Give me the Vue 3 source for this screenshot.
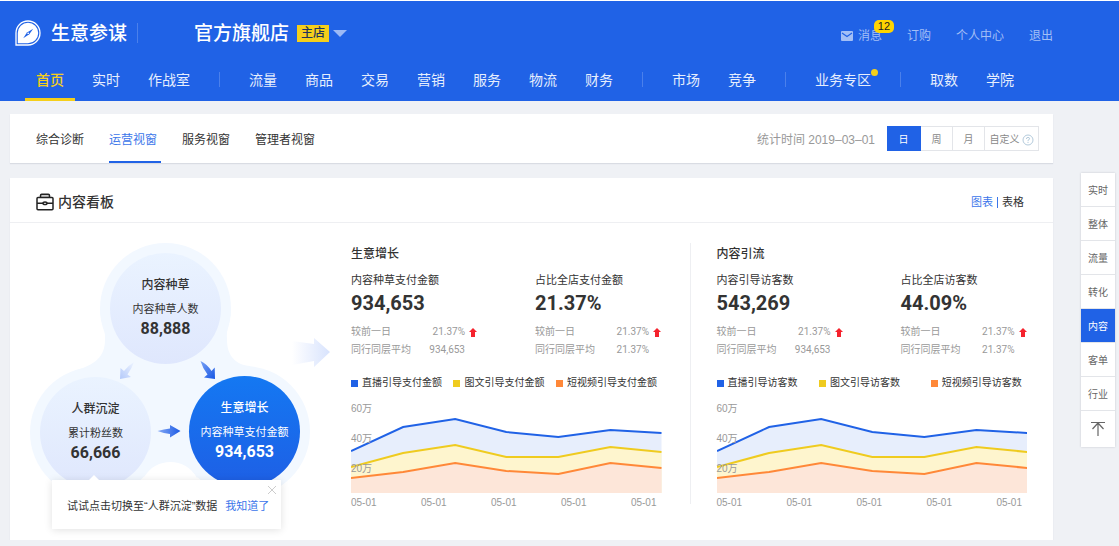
<script setup>
import { ref } from 'vue'

const navGroups = [
  ['首页', '实时', '作战室'],
  ['流量', '商品', '交易', '营销', '服务', '物流', '财务'],
  ['市场', '竞争'],
  ['业务专区'],
  ['取数', '学院'],
]
const activeNav = ref('首页')
const flagged = '业务专区'

const tabs = ['综合诊断', '运营视窗', '服务视窗', '管理者视窗']
const activeTab = ref('运营视窗')

const periods = ['日', '周', '月', '自定义']
const activePeriod = ref('日')

const sections = ['实时', '整体', '流量', '转化', '内容', '客单', '行业']
const activeSection = ref('内容')

const nodes = [
  { key: 'seed', title: '内容种草', label: '内容种草人数', value: '88,888' },
  { key: 'crowd', title: '人群沉淀', label: '累计粉丝数', value: '66,666' },
  { key: 'growth', title: '生意增长', label: '内容种草支付金额', value: '934,653' },
]
const showTip = ref(true)

const panels = [
  {
    key: 'pay',
    title: '生意增长',
    metrics: [
      { label: '内容种草支付金额', value: '934,653', change: '21.37%', average: '934,653' },
      { label: '占比全店支付金额', value: '21.37%', change: '21.37%', average: '21.37%' },
    ],
    legend: ['直播引导支付金额', '图文引导支付金额', '短视频引导支付金额'],
  },
  {
    key: 'visit',
    title: '内容引流',
    metrics: [
      { label: '内容引导访客数', value: '543,269', change: '21.37%', average: '934,653' },
      { label: '占比全店访客数', value: '44.09%', change: '21.37%', average: '21.37%' },
    ],
    legend: ['直播引导访客数', '图文引导访客数', '短视频引导访客数'],
  },
]

const xs = [0, 52, 104, 155, 207, 259, 310]
const series = [
  { color: '#2062e6', fill: '#e7eefc', ys: [51, 27, 19, 32, 37, 30, 33] },
  { color: '#efcb1f', fill: '#fef5ce', ys: [67, 53, 45, 57, 57, 47, 52] },
  { color: '#ff8838', fill: '#fde6d9', ys: [78, 72, 63, 71, 74, 63, 68] },
].map((s) => {
  const line = xs.map((x, i) => `${x},${s.ys[i]}`).join(' ')
  return { ...s, line, area: `0,93 ${line} 310,93` }
})
const dates = ['05-01', '05-01', '05-01', '05-01', '05-01']
</script>

<template>
  <div class="page">
    <header class="header">
      <div class="topbar">
        <svg class="logo" viewBox="0 0 26 26" width="26" height="26" aria-hidden="true">
          <path d="M1 25V13A12 12 0 1 1 13 25Z" fill="none" stroke="#fff" stroke-width="1.300" />
          <path d="M2.800 23.200V13A10.200 10.200 0 1 1 13 23.200Z" fill="#fff" />
          <path d="M18.200 8.800L14.300 14.300L8.200 18.200L12 12.500Z" fill="#2062e6" />
          <circle cx="13.200" cy="13.400" r="0.800" fill="#fff" />
        </svg>
        <span class="brand">生意参谋</span>
        <span class="brand-line"></span>
        <button class="shop" type="button">
          <span class="shop-name">官方旗舰店</span>
          <span class="shop-tag">主店</span>
          <svg viewBox="0 0 14 7" width="14" height="7" aria-hidden="true"><path d="M0 0H14L7 7Z" fill="#9dbaf5" /></svg>
        </button>
        <nav class="account">
          <a href="#" class="messages">
            <svg viewBox="0 0 12 10" width="12" height="10" aria-hidden="true">
              <rect width="12" height="10" rx="1" fill="#a3bff6" />
              <path d="M1 2L6 5.500L11 2" fill="none" stroke="#2062e6" stroke-width="1.200" />
            </svg>
            消息<span class="count">12</span>
          </a>
          <a href="#">订购</a>
          <a href="#">个人中心</a>
          <a href="#">退出</a>
        </nav>
      </div>
      <nav class="mainnav">
        <div v-for="(group, g) in navGroups" :key="g" class="navgroup">
          <a
            v-for="item in group"
            :key="item"
            href="#"
            :class="{ active: item === activeNav, flagged: item === flagged }"
            @click.prevent="activeNav = item"
          >{{ item }}</a>
        </div>
      </nav>
    </header>

    <div class="layout">
      <main class="main">
        <section class="card filterbar">
          <nav class="tabs">
            <a
              v-for="tab in tabs"
              :key="tab"
              href="#"
              :class="{ active: tab === activeTab }"
              @click.prevent="activeTab = tab"
            >{{ tab }}</a>
          </nav>
          <span class="date">统计时间 2019–03–01</span>
          <div class="periods">
            <button
              v-for="p in periods"
              :key="p"
              type="button"
              :class="{ active: p === activePeriod, custom: p === '自定义' }"
              @click="activePeriod = p"
            >
              {{ p }}
              <svg v-if="p === '自定义'" viewBox="0 0 12 12" width="12" height="12" aria-hidden="true">
                <circle cx="6" cy="6" r="5" fill="none" stroke="#b4cbdc" />
                <path d="M4.400 5Q4.400 3.400 6 3.400T7.600 4.800Q7.600 5.600 6 6.300V7.200M6 8V9" fill="none" stroke="#b4cbdc" />
              </svg>
            </button>
          </div>
        </section>

        <section class="card board">
          <div class="board-head">
            <svg viewBox="0 0 18 18" width="18" height="18" aria-hidden="true" fill="none" stroke="#222" stroke-width="1.500">
              <path d="M4.500 4.500V2.500Q4.500 1.300 5.700 1.300H12.300Q13.500 1.300 13.500 2.500V4.500" fill="#ccc" />
              <rect x="1" y="4.500" width="16" height="12.300" rx="1" fill="#fff" />
              <path d="M1 10.300H7M11 10.300H17" />
              <ellipse cx="9" cy="10.300" rx="2" ry="1.300" />
            </svg>
            <h2>内容看板</h2>
            <div class="views">
              <a href="#" class="active">图表</a><span></span><a href="#">表格</a>
            </div>
          </div>

          <div class="board-body">
            <div class="diagram">
              <svg class="canvas" viewBox="0 0 341 317" width="341" height="317" aria-hidden="true">
                <defs>
                  <linearGradient id="fade" x1="0" x2="1"><stop offset="0" stop-color="#fff" /><stop offset="1" stop-color="#d8e3fd" /></linearGradient>
                  <linearGradient id="soft" x1="1" y1="0" x2="0" y2="1"><stop offset="0" stop-color="#eef4ff" /><stop offset="1" stop-color="#b3c9fa" /></linearGradient>
                  <linearGradient id="down" x1="0" y1="0" x2="1" y2="1"><stop offset="0" stop-color="#7aa2f5" /><stop offset="1" stop-color="#1656e4" /></linearGradient>
                  <linearGradient id="right" x1="0" x2="1"><stop offset="0" stop-color="#86a9f5" /><stop offset="1" stop-color="#1c5be5" /></linearGradient>
                </defs>
                <g fill="#f2f8ff">
                  <circle cx="155.500" cy="85.500" r="65.500" />
                  <circle cx="85.500" cy="209.500" r="65.500" />
                  <circle cx="234.500" cy="208.500" r="65.500" />
                  <path d="M90 86C90 98 96 104 95 117C95 134 84 142 67 147L85 209L134 254C146 234 176 234 187 255L234 208L240 143C227 142 217 134 217 117C216 104 221 98 221 86Z" />
                </g>
                <path fill="url(#fade)" d="M282 118L304 121V115L320 129L304 144V138L282 142Z" />
                <path fill="url(#soft)" d="M110 156L110.500 145L114 148Q119 142 124 139Q122 145 117.500 151.500L121 154Z" />
                <path fill="url(#down)" d="M205 156L204.700 144.500L201.500 148Q197 141 190.500 138Q193 146 197.500 151.500L194 154.500Z" />
                <path fill="url(#right)" d="M147.500 208Q154 206 160 205.500V202L170.500 208L160 214.500V211Q154 210.500 147.500 208Z" />
              </svg>
              <button v-for="n in nodes" :key="n.key" type="button" class="node" :class="n.key">
                <span class="node-title">{{ n.title }}</span>
                <span class="node-label">{{ n.label }}</span>
                <span class="node-value">{{ n.value }}</span>
              </button>
              <div v-if="showTip" class="tip">
                <span>试试点击切换至“人群沉淀”数据</span>
                <button type="button" class="tip-ok" @click="showTip = false">我知道了</button>
                <button type="button" class="tip-close" aria-label="关闭" @click="showTip = false">
                  <svg viewBox="0 0 10 10" width="10" height="10"><path d="M1 1L9 9M9 1L1 9" stroke="#ccc" /></svg>
                </button>
              </div>
            </div>

            <article v-for="p in panels" :key="p.key" class="panel" :class="p.key">
              <h3>{{ p.title }}</h3>
              <div class="metrics">
                <div v-for="m in p.metrics" :key="m.label">
                  <div class="metric-label">{{ m.label }}</div>
                  <div class="metric-value">{{ m.value }}</div>
                  <div class="compare">
                    <span>较前一日</span><b>{{ m.change }}</b>
                    <svg viewBox="0 0 8 9" width="8" height="9" aria-hidden="true"><path d="M4 0L8 4H6V9H2V4H0Z" fill="#f5222d" /></svg>
                  </div>
                  <div class="compare"><span>同行同层平均</span><b>{{ m.average }}</b></div>
                </div>
              </div>
              <ul class="legend">
                <li v-for="(name, i) in p.legend" :key="name">
                  <i :style="{ background: series[i].color }"></i>{{ name }}
                </li>
              </ul>
              <div class="chart">
                <svg viewBox="0 0 310 93" preserveAspectRatio="none" role="img" :aria-label="p.title">
                  <template v-for="s in series" :key="s.color">
                    <polygon :points="s.area" :fill="s.fill" />
                    <polyline :points="s.line" fill="none" :stroke="s.color" stroke-width="2" vector-effect="non-scaling-stroke" />
                  </template>
                </svg>
                <div class="scale"><span>60万</span><span>40万</span><span>20万</span></div>
              </div>
              <div class="dates"><span v-for="(d, i) in dates" :key="i">{{ d }}</span></div>
            </article>
          </div>
        </section>
      </main>

      <nav class="sidenav">
        <a
          v-for="s in sections"
          :key="s"
          href="#"
          :class="{ active: s === activeSection }"
          @click.prevent="activeSection = s"
        >{{ s }}</a>
        <button type="button" aria-label="返回顶部">
          <svg viewBox="0 0 16 16" width="16" height="16" fill="none" stroke="#666"><path d="M1 1.500H15M8 2V15M2.500 8L8 2L13.500 8" stroke-width="1.200" /></svg>
        </button>
      </nav>
    </div>
  </div>
</template>

<style>
body {
  margin: 0;
  background: #eff1f5;
}
</style>

<style scoped>
.page,
.page * {
  box-sizing: border-box;
}
.page {
  border-top: 1px solid #fff;
  font-family: 'Liberation Sans', 'Noto Sans CJK SC', sans-serif;
  font-size: 12px;
  line-height: 16px;
  color: #333;
}
a {
  color: inherit;
  text-decoration: none;
}
button {
  margin: 0;
  padding: 0;
  border: 0;
  background: none;
  font: inherit;
  color: inherit;
  cursor: pointer;
}
svg {
  display: block;
  flex: none;
}
h2,
h3,
ul {
  margin: 0;
  padding: 0;
}

.header {
  display: flex;
  flex-direction: column;
  height: 100px;
  background: #2062e6;
  color: #fff;
}
.topbar {
  display: flex;
  align-items: center;
  height: 64px;
  padding: 0 66px 0 15px;
}
.brand,
.shop-name {
  padding-top: 2px;
  font-size: 19px;
  line-height: 24px;
  font-weight: 500;
}
.brand {
  margin-left: 10px;
}
.brand-line {
  width: 1px;
  height: 20px;
  margin: 0 56px 0 10px;
  background: #4b80eb;
}
.shop {
  display: flex;
  align-items: center;
}
.shop-tag {
  width: 32px;
  margin: 0 4px 0 8px;
  background: #f5cf1b;
  color: #22355c;
  font-weight: 500;
  line-height: 17px;
}
.account {
  display: flex;
  gap: 25px;
  margin-left: auto;
  padding-top: 6px;
  color: #a3bff6;
}
.messages {
  display: flex;
  align-items: center;
  gap: 5px;
  position: relative;
}
.count {
  position: absolute;
  right: -12px;
  top: -8px;
  width: 20px;
  height: 13px;
  border-radius: 5px;
  background: #ffd400;
  color: #222;
  font-size: 11px;
  line-height: 13px;
  text-align: center;
}
.mainnav {
  display: flex;
  height: 36px;
  padding-left: 36px;
  font-size: 14px;
  line-height: 30px;
  color: #e6eefd;
}
.navgroup {
  display: flex;
  gap: 28px;
}
.navgroup + .navgroup::before {
  content: '';
  width: 1px;
  height: 15px;
  margin: 7px 1px 0 29px;
  background: #4b80eb;
}
.navgroup a {
  position: relative;
  white-space: nowrap;
}
.navgroup .active {
  color: #f5cf1b;
  font-weight: 500;
}
.navgroup .active::after {
  content: '';
  position: absolute;
  left: -11px;
  right: -11px;
  bottom: 0;
  height: 3px;
  background: #f5cf1b;
}
.flagged::after {
  content: '';
  position: absolute;
  right: -7px;
  top: 4px;
  width: 7px;
  height: 7px;
  border-radius: 50%;
  background: #f5cf1b;
}

.layout {
  display: flex;
  align-items: flex-start;
  gap: 28px;
  padding: 13px 4px 0 10px;
}
.main {
  flex: 1;
  min-width: 0;
}
.card {
  background: #fff;
  box-shadow: 0 1px 1px #d9dce3;
}
.filterbar {
  display: flex;
  align-items: center;
  height: 49px;
  margin-bottom: 15px;
  padding: 0 14px 0 26px;
}
.tabs {
  display: flex;
  gap: 25px;
  line-height: 45px;
}
.tabs a {
  position: relative;
  padding-top: 4px;
}
.tabs .active {
  color: #3b76ea;
}
.tabs .active::after {
  content: '';
  position: absolute;
  left: 0;
  right: -4px;
  bottom: 0;
  height: 2px;
  background: #2062e6;
}
.date {
  margin-left: auto;
  padding-top: 2px;
  color: #999;
}
.periods {
  display: flex;
  height: 25px;
  margin-left: 12px;
  font-size: 10px;
  color: #888;
}
.periods button {
  width: 32px;
  padding-top: 2px;
  border: 1px solid #e3e5e9;
  border-left: 0;
}
.periods .active {
  width: 34px;
  border-color: #2062e6;
  background: #2062e6;
  color: #fff;
}
.periods .custom {
  display: flex;
  align-items: center;
  justify-content: center;
  gap: 2px;
  width: 54px;
}

.board-head {
  display: flex;
  align-items: center;
  height: 45px;
  padding: 4px 29px 0 26px;
  border-bottom: 1px solid #eeeff2;
}
.board-head h2 {
  margin-left: 4px;
  font-size: 14px;
  line-height: 20px;
  font-weight: 500;
}
.views {
  display: flex;
  align-items: center;
  gap: 4px;
  margin-left: auto;
  font-size: 11px;
}
.views span {
  width: 1px;
  height: 11px;
  background: #3b76ea;
}
.views .active {
  color: #3b76ea;
}
.board-body {
  display: flex;
}

.diagram {
  position: relative;
  flex: none;
  width: 341px;
  height: 317px;
}
.node {
  position: absolute;
  display: flex;
  flex-direction: column;
  align-items: center;
  width: 111px;
  height: 111px;
  padding-top: 24px;
  border-radius: 50%;
  background: linear-gradient(#eaf3ff, #dfe7fd);
  white-space: nowrap;
}
.seed {
  left: 100px;
  top: 30px;
}
.crowd {
  left: 30px;
  top: 154px;
}
.growth {
  left: 179px;
  top: 153px;
  background: linear-gradient(#1478f2, #1e5fe5);
  color: #fff;
}
.node-title {
  margin-bottom: 8px;
  font-weight: 500;
}
.node-label {
  font-size: 11px;
}
.node-value {
  font-family: Roboto, sans-serif;
  font-size: 16px;
  line-height: 24px;
  font-weight: 700;
}
.tip {
  position: absolute;
  left: 42px;
  top: 257px;
  display: flex;
  align-items: center;
  gap: 8px;
  width: 229px;
  height: 49px;
  padding: 2px 0 0 15px;
  background: #fff;
  box-shadow: 0 1px 8px rgba(0, 0, 0, 0.12);
  font-size: 11px;
  white-space: nowrap;
}
.tip::before {
  content: '';
  position: absolute;
  left: 37px;
  top: -5px;
  border: 5px solid transparent;
  border-top: 0;
  border-bottom-color: #fff;
}
.tip-ok {
  color: #3b76ea;
}
.tip-close {
  position: absolute;
  right: 4px;
  top: 5px;
}

.panel {
  flex: 1 1 0;
  min-width: 0;
  padding: 23px 28px 0 0;
}
.visit {
  position: relative;
  padding: 23px 26px 0 27px;
}
.visit::before {
  content: '';
  position: absolute;
  left: 0;
  top: 20px;
  width: 1px;
  height: 261px;
  background: #eeeff2;
}
h3 {
  font-size: 12px;
  font-weight: 500;
}
.metrics {
  display: grid;
  grid-template-columns: 184px 1fr;
  margin-top: 10px;
}
.metric-label {
  font-size: 11px;
  white-space: nowrap;
}
.metric-value {
  margin: 3px 0 8px;
  font-family: Roboto, sans-serif;
  font-size: 20px;
  line-height: 24px;
  font-weight: 700;
}
.compare {
  display: flex;
  align-items: center;
  height: 18px;
  font-size: 10px;
  color: #999;
  white-space: nowrap;
}
.compare span {
  width: 62px;
}
.compare b {
  width: 52px;
  margin-right: 4px;
  font-family: Roboto, sans-serif;
  font-weight: 400;
  text-align: right;
}
.legend {
  display: grid;
  grid-template-columns: 33% 33% auto;
  margin-top: 16px;
  list-style: none;
  font-size: 10px;
  white-space: nowrap;
}
.visit .legend {
  grid-template-columns: 33% 36% auto;
}
.legend li {
  display: flex;
  align-items: center;
  gap: 4px;
}
.legend i {
  width: 7px;
  height: 7px;
}
.chart {
  position: relative;
  margin-top: 9px;
}
.chart svg {
  width: 100%;
  height: 93px;
}
.scale {
  position: absolute;
  inset: 0;
  display: flex;
  flex-direction: column;
  gap: 14px;
  padding-top: 1px;
  font-size: 10px;
  color: #999;
}
.dates {
  display: flex;
  justify-content: space-between;
  padding: 2px 5px 0 0;
  font-size: 10px;
  color: #999;
}

.sidenav {
  width: 34px;
  margin-top: 59px;
  background: #fff;
  box-shadow: 0 0 2px #c4c7cd;
  font-size: 10px;
  color: #666;
  text-align: center;
}
.sidenav a {
  display: block;
  height: 34px;
  border-bottom: 1px solid #e3e5e9;
  line-height: 36px;
}
.sidenav .active {
  background: #2062e6;
  color: #fff;
}
.sidenav button {
  display: flex;
  align-items: center;
  justify-content: center;
  width: 100%;
  height: 36px;
}
</style>
